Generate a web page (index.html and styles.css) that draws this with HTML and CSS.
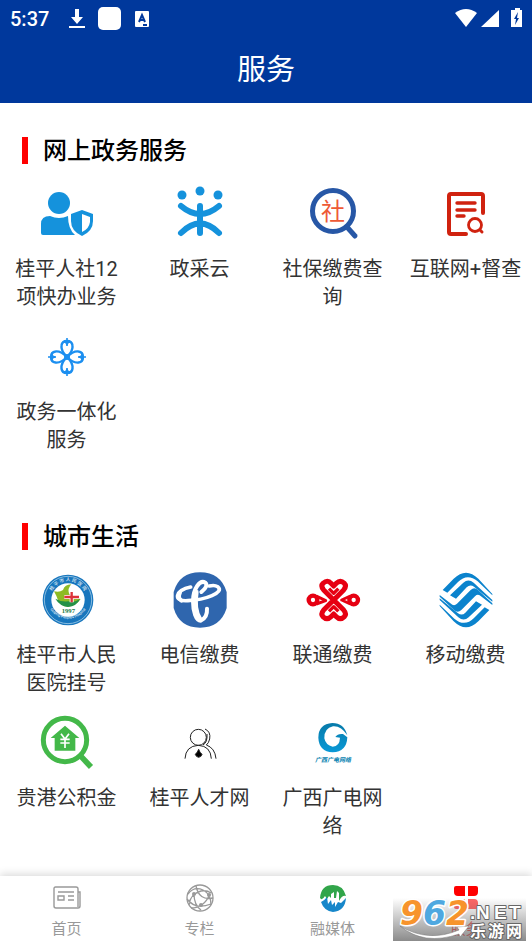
FILE: index.html
```
<!DOCTYPE html>
<html lang="zh-CN">
<head>
  <meta charset="UTF-8">
  <meta name="viewport" content="width=device-width, initial-scale=1">
  <title>服务</title>
  <link rel="stylesheet" href="styles.css">
</head>
<body>
  <header class="header">
    <div class="status-bar">
      <span class="time">5:37</span>
      <svg class="status-icon" width="16" height="22" viewBox="0 0 16 22" fill="#fff">
        <path d="M6 1h4v8h4l-6 7-6-7h4z"/><path d="M0 18h16v2H0z"/>
      </svg>
      <span class="status-square"></span>
      <svg class="status-icon" width="14" height="16" viewBox="0 0 14 16">
        <rect width="14" height="16" rx="1" fill="#fff"/>
        <path d="M4 11 7 4l3 7M5 9h4M8 14h4" fill="none" stroke="#00389c" stroke-width="2"/>
      </svg>
      <svg class="status-right" width="68" height="22" viewBox="0 0 68 22" fill="#fff">
        <path d="M1 5Q12-3 23 5L12 19z"/>
        <path d="M45 2v17H27z"/>
        <path d="M59 2h2V0h5v2h2v17H57V2z"/>
        <path d="m64 4-4 7h2l-1 6 4-7h-2z" fill="#00389c"/>
      </svg>
    </div>
    <h1>服务</h1>
  </header>

  <main>
    <section class="service">
      <h2>网上政务服务</h2>
      <div class="grid">
        <a href="#" class="item">
          <svg class="icon" viewBox="0 0 56 56" fill="#1592dc">
            <circle cx="20" cy="17" r="11"/>
            <path d="M2 47V38Q2 30 11 30Q20 34 29 30Q29 43 36 49H4Q2 49 2 47z"/>
            <path d="M43 24 54 28V35Q54 45 43 50Q32 45 32 35V28z"/>
            <path d="M43 28 51 31V36Q50 43 43 46z" fill="#fff"/>
          </svg>
          <span>桂平人社12项快办业务</span>
        </a>
        <a href="#" class="item">
          <svg class="icon" viewBox="0 0 56 56" fill="#1592dc">
            <circle cx="10" cy="9" r="4.5"/><circle cx="28" cy="5" r="4.5"/><circle cx="46" cy="9" r="4.5"/>
            <path d="M9 20Q28 36 47 20M9 47Q28 28 47 47M28 20V47" fill="none" stroke="#1592dc" stroke-width="6" stroke-linecap="round"/>
          </svg>
          <span>政采云</span>
        </a>
        <a href="#" class="item">
          <svg class="icon" viewBox="0 0 56 56">
            <circle cx="28" cy="25" r="20.5" fill="none" stroke="#2757a6" stroke-width="5"/>
            <path d="m42 41 8 9" stroke="#2757a6" stroke-width="5" stroke-linecap="round"/>
            <text x="28" y="34" class="icon-she">社</text>
          </svg>
          <span>社保缴费查询</span>
        </a>
        <a href="#" class="item">
          <svg class="icon" viewBox="0 0 56 56" fill="none" stroke="#d0220f" stroke-width="4" stroke-linecap="round" stroke-linejoin="round">
            <path d="M45 27V10Q45 8 43 8H13Q11 8 11 10V46Q11 48 13 48H28"/>
            <path d="M19 17H37M19 24H37M19 30H26" stroke-width="3.4"/>
            <circle cx="37" cy="39" r="6.5" stroke-width="2.8"/>
            <path d="m42 44 2 2" stroke-width="3"/>
          </svg>
          <span>互联网+督查</span>
        </a>
        <a href="#" class="item">
          <svg class="icon" viewBox="0 0 56 56">
            <g id="petal" fill="none" stroke="#1c8ff0" stroke-width="2.4">
              <path d="M28 28C24 24 22 20 22.500 16.500Q23 12 28 12Q33 12 33.500 16.500C34 20 32 24 28 28"/>
              <path d="M28 9V16M25 13Q28 13 28 17Q28 13 31 13" stroke-width="1.600"/>
            </g>
            <use href="#petal" transform="rotate(90 28 28)"/>
            <use href="#petal" transform="rotate(180 28 28)"/>
            <use href="#petal" transform="rotate(270 28 28)"/>
            <circle cx="28" cy="28" r="3" fill="#1c8ff0"/>
          </svg>
          <span>政务一体化服务</span>
        </a>
      </div>
    </section>

    <section class="service">
      <h2>城市生活</h2>
      <div class="grid">
        <a href="#" class="item">
          <svg class="icon" viewBox="0 0 168 168">
            <circle cx="87" cy="84" r="76" fill="#1876bd"/>
            <circle cx="87" cy="84" r="71" fill="none" stroke="#bfe0f2" stroke-width="2"/>
            <circle cx="87" cy="84" r="50" fill="#fff"/>
            <path id="seal-top" d="M34 98A55 55 0 1 1 140 98" fill="none"/>
            <path id="seal-bottom" d="M27 98A64 64 0 0 0 147 98" fill="none"/>
            <text class="seal"><textPath href="#seal-top" startOffset="50%">桂 平 市 人 民 医 院</textPath></text>
            <text class="seal-en"><textPath href="#seal-bottom" startOffset="50%">Guiping People's Hospital</textPath></text>
            <path d="M45 58Q62 62 72 54Q77 38 97 37Q85 50 90 64Q96 78 125 81Q111 102 86 104Q67 103 58 87Q54 74 45 58z" fill="#8dbb24"/>
            <path d="M49 80Q65 90 88 88Q103 94 123 81Q113 103 87 105Q62 102 49 80z" fill="#249147"/>
            <path d="M76 75H120M98 60V91" stroke="#fff" stroke-width="12"/>
            <path d="M76 75H120M98 60V91" stroke="#dc3439" stroke-width="7"/>
            <text x="88" y="123" class="seal-year">1997</text>
          </svg>
          <span>桂平市人民医院挂号</span>
        </a>
        <a href="#" class="item">
          <svg class="icon" viewBox="0 0 168 168">
            <path d="M5 60Q22 1 84 1T164 60V108Q146 167 84 167T5 108z" fill="#2f66ae"/>
            <g fill="none" stroke="#fff" stroke-linecap="round">
              <path d="M56 45C8 54 2 90 48 86C98 84 160 62 137 44Q128 38 112 42" stroke-width="11"/>
              <path d="M88 60Q110 42 100 32C84 22 63 50 63 88C63 118 72 146 86 146C100 140 106 126 105 110" stroke-width="12"/>
              <path d="M73 60C68 90 70 120 84 142" stroke-width="14"/>
              <path d="M24 62Q16 78 28 86" stroke-width="12"/>
            </g>
          </svg>
          <span>电信缴费</span>
        </a>
        <a href="#" class="item">
          <svg class="icon" viewBox="0 0 168 168" fill="none" stroke="#e60012" stroke-width="15" stroke-linejoin="round">
            <path d="M86 84 56 54Q46 42 54 34Q68 22 78 34L86 42 94 34Q106 22 118 34Q126 42 116 54L56 114Q46 126 54 134Q66 146 78 134L86 126 94 134Q106 146 118 134Q126 126 116 114z"/>
            <path d="M72 50 86 64 100 50M72 118 86 104 100 118" stroke-width="10"/>
            <circle cx="24" cy="84" r="13" stroke-width="13"/>
            <circle cx="146" cy="84" r="13" stroke-width="13"/>
            <path d="M34 72 62 86 34 96M136 72 110 84 136 96" stroke-width="9"/>
          </svg>
          <span>联通缴费</span>
        </a>
        <a href="#" class="item">
          <svg class="icon" viewBox="0 0 168 168" fill="#0b83cd">
            <g id="wave">
              <path d="M14 54 47 20Q84-16 121 20L163 66V70L119 28Q88 2 60 30L28 62z"/>
              <path d="M36 70 76 32Q91 19 107 32L163 84V89L108 44Q96 36 86 46L54 80z"/>
            </g>
            <use href="#wave" transform="rotate(180 84 84)"/>
            <path d="M163 94 120 54Q109 44 98 54L57 95Q50 102 43 98L5 69V74L48 114Q59 124 70 114L111 73Q118 66 125 70L163 99z"/>
          </svg>
          <span>移动缴费</span>
        </a>
        <a href="#" class="item">
          <svg class="icon" viewBox="0 0 168 168">
            <circle cx="78" cy="75" r="65" fill="none" stroke="#43b849" stroke-width="15"/>
            <path d="m124 122 32 34" stroke="#43b849" stroke-width="17"/>
            <path d="M78 32 121 69H109V107H47V69H35z" fill="#43b849"/>
            <path d="m66 56 12 16 12-16M64 73H92M64 84H92M78 72V99" fill="none" stroke="#fff" stroke-width="5"/>
          </svg>
          <span>贵港公积金</span>
        </a>
        <a href="#" class="item">
          <svg class="icon" viewBox="0 0 168 168" fill="none" stroke="#222" stroke-width="3">
            <circle cx="79" cy="67" r="24"/>
            <path d="M39 131Q41 93 79 91Q116 93 118 131M99 42Q117 50 113 72Q110 85 103 90Q129 99 132 131M105 57Q107 82 93 90"/>
            <path d="M80 103Q83 113 90 118Q88 126 80 127Q72 126 70 118Q77 112 80 103z" fill="#000"/>
          </svg>
          <span>桂平人才网</span>
        </a>
        <a href="#" class="item">
          <svg class="icon" viewBox="0 0 168 168">
            <defs><linearGradient id="sea" x2="0" y2="1"><stop stop-color="#077aa9"/><stop offset="1" stop-color="#0999d7"/></linearGradient></defs>
            <path d="M127 61Q117 24 82 24Q40 27 40 68Q42 110 83 112Q125 111 127 67L114 57Q98 55 91 66L105 68Q104 94 83 95Q62 91 58 70Q57 40 84 34Q108 32 127 61z" fill="url(#sea)"/>
            <text x="84" y="141" class="logo-text">广西广电网络</text>
          </svg>
          <span>广西广电网络</span>
        </a>
      </div>
    </section>
  </main>

  <nav class="tabs">
    <a href="#" class="tab">
      <svg viewBox="0 0 28 28" fill="none" stroke="#999" stroke-width="1.400">
        <path d="M25 23V5Q25 3 23 3H2.500Q1 3 1 4.500V22Q1 24 3 24H25Q27 24 27 22V8H25M5 8H21M15 12H21M15 16H21M5 12H11V16H5z"/>
      </svg>
      <span>首页</span>
    </a>
    <a href="#" class="tab">
      <svg viewBox="0 0 28 28" fill="none" stroke="#999" stroke-width="1.300">
        <circle cx="14" cy="14" r="13"/>
        <path d="M10 2Q13 17 27 14M2 10Q8 2 17 6Q25 10 25 21M3 21Q4 10 15 7Q21 6 25 9M1 15Q9 26 25 20M5 24Q18 24 24 10M8 10Q8 21 15 26"/>
        <g fill="#999" stroke="none"><circle cx="8" cy="10" r="2"/><circle cx="23" cy="11" r="2"/><circle cx="15" cy="21" r="2"/></g>
      </svg>
      <span>专栏</span>
    </a>
    <a href="#" class="tab">
      <svg viewBox="0 0 28 28">
        <path d="M1 14Q2 1 14 1Q24 1 27 12Q23 11 20 17V9L18 7L17 14H15V8L12 10V14L10 12L8 15L6 12Q3 17 1 14z" fill="#31a54a"/>
        <path d="M2 18Q5 17 8 13L9 20L12 16L13 21L16 18V23L19 18L22 19L27 14Q26 27 14 28Q5 27 2 18z" fill="#1787ca"/>
      </svg>
      <span>融媒体</span>
    </a>
    <a href="#" class="tab active">
      <svg viewBox="0 0 28 28" fill="#f00">
        <path d="M4 2H13V12H6Q2 12 2 8V4Q2 2 4 2zM16 2H24Q26 2 26 4V8Q26 12 22 12H16zM6 15H13V25H4Q2 25 2 23V19Q2 15 6 15zM16 15H22Q26 15 26 19V23Q26 25 24 25H16z"/>
      </svg>
      <span>服务</span>
    </a>
    <div class="watermark">
      <svg width="133" height="43" viewBox="0 0 133 43">
        <path d="M7 28Q35 45 66 32L64 29 76 28 67 39 66 36Q31 48 7 28z" fill="#fff" stroke="#777" stroke-width="0.500"/>
        <text x="7" y="27" class="wm-digit orange">9</text>
        <text x="30" y="27" class="wm-digit blue">6</text>
        <text x="53" y="27" class="wm-digit orange">2</text>
        <text x="77" y="21" class="wm-net">.</text>
        <text x="83" y="21" class="wm-net">N</text>
        <text x="101" y="21" class="wm-net">E</text>
        <text x="116" y="21" class="wm-net">T</text>
        <text x="77" y="39" class="wm-name">乐</text>
        <text x="95" y="39" class="wm-name">游</text>
        <text x="113" y="39" class="wm-name">网</text>
      </svg>
    </div>
  </nav>
</body>
</html>
```
FILE: styles.css
```
* {
  box-sizing: border-box;
  margin: 0;
  padding: 0;
}

body {
  display: flex;
  flex-direction: column;
  min-height: 100vh;
  background: #fff;
  font-family: Roboto, "Noto Sans CJK SC", sans-serif;
  color: #333;
}

a {
  color: inherit;
  text-decoration: none;
}

/* Header */
.header {
  background: #00389c;
  color: #fff;
}

.status-bar {
  display: flex;
  align-items: center;
  height: 37px;
  padding: 0 10px;
}

.time {
  font-size: 20px;
  font-weight: 500;
  margin-right: 20px;
}

.status-square {
  width: 23px;
  height: 23px;
  margin: 0 14px 0 13px;
  border-radius: 5px;
  background: #fff;
}

.status-right {
  margin-left: auto;
}

.header h1 {
  font-size: 29px;
  font-weight: 400;
  line-height: 66px;
  text-align: center;
}

/* Service groups */
main {
  flex: 1;
}

.service {
  padding-top: 34px;
}

.service + .service {
  padding-top: 69px;
}

.service h2 {
  border-left: 6px solid #f00;
  margin: 0 22px 22px;
  padding: 2px 0 0 15px;
  font-size: 24px;
  font-weight: 500;
  line-height: 25px;
  color: #000;
}

.grid {
  display: grid;
  grid-template-columns: repeat(4, 1fr);
  row-gap: 18px;
}

.item {
  display: flex;
  flex-direction: column;
  align-items: center;
  gap: 13px;
  padding: 0 9px;
  font-size: 20px;
  line-height: 28px;
  text-align: center;
}

.icon {
  width: 56px;
  height: 56px;
}

.icon text {
  text-anchor: middle;
}

.icon-she {
  font-size: 24px;
  fill: #ee5a36;
}

.seal {
  font-size: 14px;
  fill: #fff;
}

.seal-en {
  font-size: 11px;
  fill: #fff;
}

.seal-year {
  font: bold 20px "Liberation Serif", serif;
  fill: #187844;
}

.logo-text {
  font-size: 18px;
  font-style: italic;
  font-weight: 700;
  fill: #0782b0;
}

/* Bottom tabs */
.tabs {
  position: relative;
  display: grid;
  grid-template-columns: repeat(4, 1fr);
  height: 71px;
  background: #fff;
  box-shadow: 0 -2px 8px rgba(0, 0, 0, 0.15);
}

.tab {
  display: flex;
  flex-direction: column;
  align-items: center;
  gap: 7px;
  padding-top: 8px;
  font-size: 15px;
  line-height: 20px;
  color: #999;
}

.tab svg {
  width: 28px;
  height: 28px;
}

.tab.active {
  color: #f00;
}

/* Site mark over the last tab */
.watermark {
  position: absolute;
  right: 6px;
  bottom: 6px;
  background: linear-gradient(rgba(255, 255, 255, 0.4), rgba(110, 110, 110, 0.8));
}

.watermark svg {
  display: block;
  overflow: visible;
}

.watermark text {
  paint-order: stroke;
  stroke-linejoin: round;
}

.wm-digit {
  font: italic bold 33px "DejaVu Sans", sans-serif;
  stroke: #fff;
  stroke-width: 3px;
}

.orange {
  fill: #f7942c;
}

.blue {
  fill: #4fa8e0;
}

.wm-net {
  font: bold 19px "Liberation Sans", sans-serif;
  fill: #fff;
  stroke: #666;
  stroke-width: 2px;
}

.wm-name {
  font-size: 16px;
  font-weight: 700;
  fill: #fff;
  stroke: #666;
  stroke-width: 2px;
}
```
